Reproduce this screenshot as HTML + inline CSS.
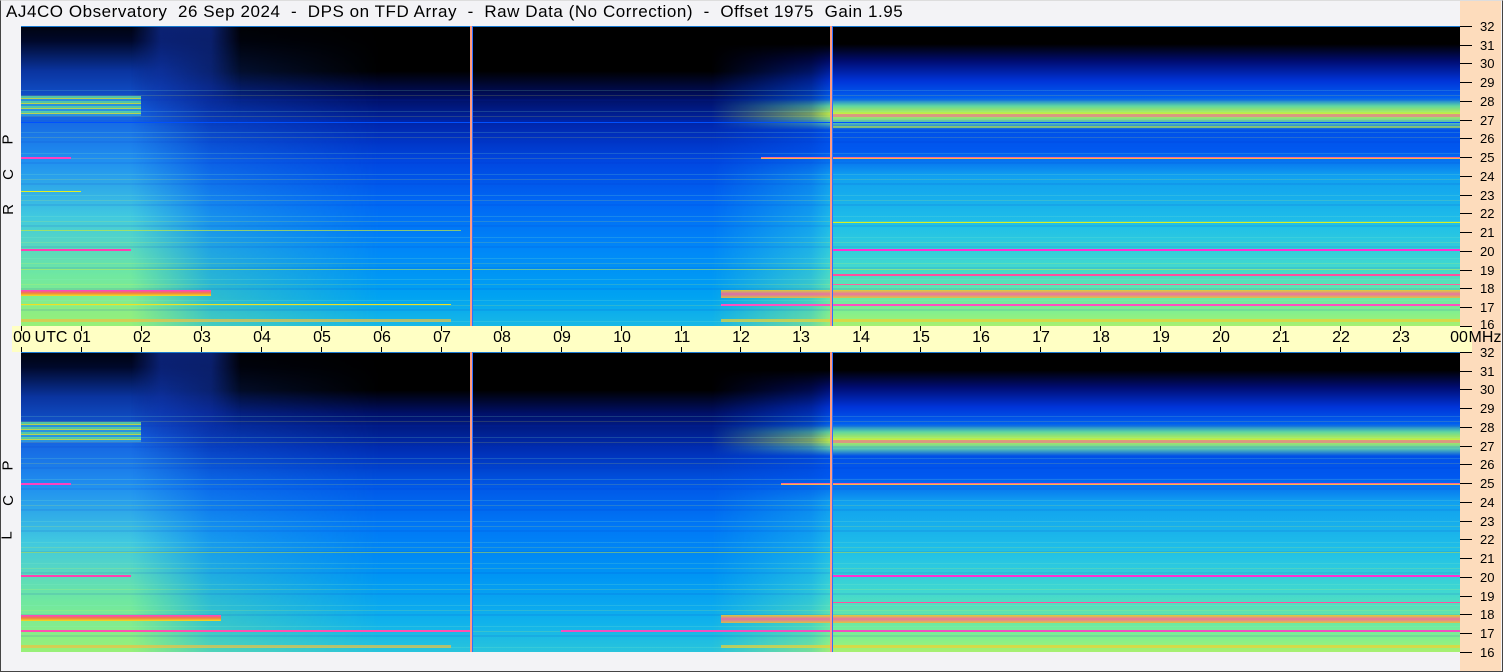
<!DOCTYPE html>
<html><head><meta charset="utf-8"><style>
*{margin:0;padding:0;box-sizing:border-box}
body{width:1503px;height:672px;background:#f3f3f6;position:relative;overflow:hidden;font-family:"Liberation Sans",Tahoma,sans-serif;color:#000}
#frame{position:absolute;left:0;top:0;width:1503px;height:672px;border:1px solid #444;border-top-color:#ddd}
.title{position:absolute;left:6px;top:2px;font-size:17px;white-space:pre;letter-spacing:0.55px}
.panel{position:absolute;left:21px;width:1439px;height:300px;overflow:hidden;background:linear-gradient(#000 0,#000 45px,#000e60 70px,#0028b0 100px,#0046e0 135px,#0066f4 175px,#0088f8 225px,#00a2f2 270px,#18b8e6 300px)}
.r{position:absolute;top:0;height:300px}
.lo{left:0;width:360px;background:linear-gradient(#000410 0,#00082a 15px,#0a34a0 45px,#1460e0 85px,#2090f0 135px,#40c8e0 190px,#70e8a0 250px,#98f078 300px);-webkit-mask-image:linear-gradient(to right,#000 0,#000 110px,rgba(0,0,0,.35) 190px,transparent 360px);mask-image:linear-gradient(to right,#000 0,#000 110px,rgba(0,0,0,.35) 190px,transparent 360px)}
.st{left:110px;width:110px;background:linear-gradient(rgba(20,60,200,.55) 0,rgba(20,60,200,.35) 60px,transparent 100px);-webkit-mask-image:linear-gradient(to right,transparent 0,#000 30px,#000 80px,transparent 110px);mask-image:linear-gradient(to right,transparent 0,#000 30px,#000 80px,transparent 110px)}
.ro{left:690px;width:749px;background:linear-gradient(#000 0,#000 18px,#000c70 35px,#0034d8 55px,#0060f0 72px,#60d8a0 80px,#c8f040 88px,#60d0b0 96px,#0050e8 104px,#0058f0 125px,#10a0f0 150px,#20c0e8 200px,#40d8d0 240px,#80f090 285px,#a8f070 300px);-webkit-mask-image:linear-gradient(to right,transparent 0,rgba(0,0,0,.6) 100px,#000 122px);mask-image:linear-gradient(to right,transparent 0,rgba(0,0,0,.6) 100px,#000 122px)}
.l{position:absolute;height:1px}
.noise{position:absolute;left:0;width:1439px;background:repeating-linear-gradient(to bottom,transparent 0 4px,rgba(140,240,200,.22) 4px 5px,transparent 5px 9px,rgba(255,255,60,.18) 9px 10px,transparent 10px 13px,rgba(0,40,200,.12) 13px 15px,transparent 15px 21px)}
.v{position:absolute;top:0;height:300px;width:2px;background:#ff9a80;box-shadow:1px 0 0 #3070ff}
.axis{position:absolute;left:12px;top:326px;width:1460px;height:26px;background:#ffffc4}
.tk{position:absolute;width:1px;height:5px;background:#000}
.tl{position:absolute;top:329px;font-size:16px;transform:translateX(-50%);white-space:pre}
.ra{position:absolute;left:1460px;top:0;width:41px;height:671px;background:#fddcbc}
.rt{position:absolute;left:1460px;width:12px;height:1px;background:#000}
.rl{position:absolute;left:1480px;font-size:13px}
.side{position:absolute;left:3px;font-size:15px;transform:rotate(-90deg)}
</style></head><body>
<div class="ra"></div>
<div class="title">AJ4CO Observatory  26 Sep 2024  -  DPS on TFD Array  -  Raw Data (No Correction)  -  Offset 1975  Gain 1.95</div>

<div class="panel" style="top:26px">
 <div class="r lo"></div>
 <div class="r st"></div>
 <div class="r ro"></div>
 <div class="noise" style="top:60px;height:240px;opacity:.8"></div>
 <div class="l" style="top:0;left:0;width:1439px;background:#1878d0"></div>
 <div class="l" style="top:70px;left:0;width:120px;height:20px;background:repeating-linear-gradient(#60e0a0 0 2px,#e0f030 2px 3px,#30a0e0 3px 5px);opacity:.8"></div>
 <div class="l" style="top:96px;left:0;width:1439px;background:#0050ff"></div>
 <div class="l" style="top:88px;left:812px;width:627px;height:3px;background:#f060a0;opacity:.6"></div>
 <div class="l" style="top:100px;left:812px;width:627px;height:2px;background:#c0e840;opacity:.6"></div>
 <div class="l" style="top:131px;left:740px;width:699px;height:2px;background:linear-gradient(#ff40c0,#f0e020)"></div>
 <div class="l" style="top:131px;left:0;width:50px;height:2px;background:#ff40c0"></div>
 <div class="l" style="top:165px;left:0;width:60px;background:#e0f020"></div>
 <div class="l" style="top:204px;left:0;width:440px;background:#c0e840;opacity:.7"></div>
 <div class="l" style="top:223px;left:0;width:110px;height:2px;background:#ff40b0"></div>
 <div class="l" style="top:223px;left:812px;width:627px;height:2px;background:#ff30d0"></div>
 <div class="l" style="top:196px;left:812px;width:627px;background:#d8f020"></div>
 <div class="l" style="top:243px;left:0;width:1439px;background:#c0f050;opacity:.5"></div>
 <div class="l" style="top:248px;left:812px;width:627px;height:2px;background:#ff50a0"></div>
 <div class="l" style="top:258px;left:812px;width:627px;background:#ff60a0"></div>
 <div class="l" style="top:264px;left:0;width:190px;height:6px;background:linear-gradient(#ff40d0,#f08040,#f0e020)"></div>
 <div class="l" style="top:264px;left:700px;width:739px;height:8px;background:linear-gradient(#f0d020,#ff60a0,#f0c030);opacity:.85"></div>
 <div class="l" style="top:278px;left:0;width:430px;background:#f0e020"></div>
 <div class="l" style="top:278px;left:700px;width:739px;height:2px;background:#ff50c0"></div>
 <div class="l" style="top:293px;left:0;width:430px;height:3px;background:#f0c040;opacity:.7"></div>
 <div class="l" style="top:293px;left:700px;width:739px;height:3px;background:#f0d030;opacity:.7"></div>
 <div class="v" style="left:449px"></div>
 <div class="v" style="left:809px"></div>
</div>

<div class="axis"></div>

<div class="panel" style="top:352px;background:linear-gradient(#000 0,#000 38px,#00106a 62px,#0030b8 100px,#0058e8 135px,#0078f6 175px,#0096f4 225px,#10b2ec 270px,#28c4dc 300px)">
 <div class="r lo"></div>
 <div class="r st"></div>
 <div class="r ro"></div>
 <div class="noise" style="top:60px;height:240px;opacity:.8"></div>
 <div class="l" style="top:0;left:0;width:1439px;background:#1878d0"></div>
 <div class="l" style="top:70px;left:0;width:120px;height:20px;background:repeating-linear-gradient(#60e0a0 0 2px,#e0f030 2px 3px,#30a0e0 3px 5px);opacity:.8"></div>
 <div class="l" style="top:88px;left:812px;width:627px;height:3px;background:#f060a0;opacity:.6"></div>
 <div class="l" style="top:131px;left:760px;width:679px;height:2px;background:linear-gradient(#ff40c0,#f0e020)"></div>
 <div class="l" style="top:131px;left:0;width:50px;height:2px;background:#ff40c0"></div>
 <div class="l" style="top:200px;left:0;width:1439px;background:#c0e840;opacity:.5"></div>
 <div class="l" style="top:223px;left:0;width:110px;height:2px;background:#ff40b0"></div>
 <div class="l" style="top:223px;left:812px;width:627px;height:2px;background:#ff30d0"></div>
 <div class="l" style="top:250px;left:812px;width:627px;background:#ff50a0"></div>
 <div class="l" style="top:263px;left:0;width:200px;height:6px;background:linear-gradient(#ff40d0,#f08040,#f0e020)"></div>
 <div class="l" style="top:263px;left:700px;width:739px;height:8px;background:linear-gradient(#f0d020,#ff60a0,#f0c030);opacity:.85"></div>
 <div class="l" style="top:278px;left:0;width:450px;height:2px;background:#ff50b0"></div>
 <div class="l" style="top:278px;left:540px;width:899px;height:2px;background:#f050c0"></div>
 <div class="l" style="top:293px;left:0;width:430px;height:3px;background:#f0c040;opacity:.7"></div>
 <div class="l" style="top:293px;left:700px;width:739px;height:3px;background:#f0d030;opacity:.7"></div>
 <div class="v" style="left:449px"></div>
 <div class="v" style="left:809px"></div>
</div>

<div class="tk" style="left:21px;top:326px"></div><div class="tk" style="left:21px;top:347px"></div>
<div class="tk" style="left:81px;top:326px"></div><div class="tk" style="left:81px;top:347px"></div>
<div class="tk" style="left:141px;top:326px"></div><div class="tk" style="left:141px;top:347px"></div>
<div class="tk" style="left:201px;top:326px"></div><div class="tk" style="left:201px;top:347px"></div>
<div class="tk" style="left:261px;top:326px"></div><div class="tk" style="left:261px;top:347px"></div>
<div class="tk" style="left:321px;top:326px"></div><div class="tk" style="left:321px;top:347px"></div>
<div class="tk" style="left:381px;top:326px"></div><div class="tk" style="left:381px;top:347px"></div>
<div class="tk" style="left:441px;top:326px"></div><div class="tk" style="left:441px;top:347px"></div>
<div class="tk" style="left:501px;top:326px"></div><div class="tk" style="left:501px;top:347px"></div>
<div class="tk" style="left:561px;top:326px"></div><div class="tk" style="left:561px;top:347px"></div>
<div class="tk" style="left:621px;top:326px"></div><div class="tk" style="left:621px;top:347px"></div>
<div class="tk" style="left:681px;top:326px"></div><div class="tk" style="left:681px;top:347px"></div>
<div class="tk" style="left:740px;top:326px"></div><div class="tk" style="left:740px;top:347px"></div>
<div class="tk" style="left:800px;top:326px"></div><div class="tk" style="left:800px;top:347px"></div>
<div class="tk" style="left:860px;top:326px"></div><div class="tk" style="left:860px;top:347px"></div>
<div class="tk" style="left:920px;top:326px"></div><div class="tk" style="left:920px;top:347px"></div>
<div class="tk" style="left:980px;top:326px"></div><div class="tk" style="left:980px;top:347px"></div>
<div class="tk" style="left:1040px;top:326px"></div><div class="tk" style="left:1040px;top:347px"></div>
<div class="tk" style="left:1100px;top:326px"></div><div class="tk" style="left:1100px;top:347px"></div>
<div class="tk" style="left:1160px;top:326px"></div><div class="tk" style="left:1160px;top:347px"></div>
<div class="tk" style="left:1220px;top:326px"></div><div class="tk" style="left:1220px;top:347px"></div>
<div class="tk" style="left:1280px;top:326px"></div><div class="tk" style="left:1280px;top:347px"></div>
<div class="tk" style="left:1340px;top:326px"></div><div class="tk" style="left:1340px;top:347px"></div>
<div class="tk" style="left:1400px;top:326px"></div><div class="tk" style="left:1400px;top:347px"></div>

<div class="tl" style="left:22px">00</div>
<div class="tl" style="left:51px">UTC</div>
<div class="tl" style="left:82px">01</div>
<div class="tl" style="left:142px">02</div>
<div class="tl" style="left:202px">03</div>
<div class="tl" style="left:262px">04</div>
<div class="tl" style="left:322px">05</div>
<div class="tl" style="left:382px">06</div>
<div class="tl" style="left:442px">07</div>
<div class="tl" style="left:502px">08</div>
<div class="tl" style="left:562px">09</div>
<div class="tl" style="left:622px">10</div>
<div class="tl" style="left:682px">11</div>
<div class="tl" style="left:741px">12</div>
<div class="tl" style="left:801px">13</div>
<div class="tl" style="left:861px">14</div>
<div class="tl" style="left:921px">15</div>
<div class="tl" style="left:981px">16</div>
<div class="tl" style="left:1041px">17</div>
<div class="tl" style="left:1101px">18</div>
<div class="tl" style="left:1161px">19</div>
<div class="tl" style="left:1221px">20</div>
<div class="tl" style="left:1281px">21</div>
<div class="tl" style="left:1341px">22</div>
<div class="tl" style="left:1401px">23</div>
<div class="tl" style="left:1459px">00</div>
<div class="tl" style="left:1485px">MHz</div>

<div class="rt" style="top:26px"></div><div class="rl" style="top:19px">32</div>
<div class="rt" style="top:45px"></div><div class="rl" style="top:38px">31</div>
<div class="rt" style="top:63px"></div><div class="rl" style="top:56px">30</div>
<div class="rt" style="top:82px"></div><div class="rl" style="top:75px">29</div>
<div class="rt" style="top:101px"></div><div class="rl" style="top:94px">28</div>
<div class="rt" style="top:120px"></div><div class="rl" style="top:113px">27</div>
<div class="rt" style="top:138px"></div><div class="rl" style="top:131px">26</div>
<div class="rt" style="top:157px"></div><div class="rl" style="top:150px">25</div>
<div class="rt" style="top:176px"></div><div class="rl" style="top:169px">24</div>
<div class="rt" style="top:195px"></div><div class="rl" style="top:188px">23</div>
<div class="rt" style="top:213px"></div><div class="rl" style="top:206px">22</div>
<div class="rt" style="top:232px"></div><div class="rl" style="top:225px">21</div>
<div class="rt" style="top:251px"></div><div class="rl" style="top:244px">20</div>
<div class="rt" style="top:270px"></div><div class="rl" style="top:263px">19</div>
<div class="rt" style="top:288px"></div><div class="rl" style="top:281px">18</div>
<div class="rt" style="top:307px"></div><div class="rl" style="top:300px">17</div>
<div class="rt" style="top:326px"></div><div class="rl" style="top:317px">16</div>
<div class="rt" style="top:352px"></div><div class="rl" style="top:345px">32</div>
<div class="rt" style="top:371px"></div><div class="rl" style="top:364px">31</div>
<div class="rt" style="top:389px"></div><div class="rl" style="top:382px">30</div>
<div class="rt" style="top:408px"></div><div class="rl" style="top:401px">29</div>
<div class="rt" style="top:427px"></div><div class="rl" style="top:420px">28</div>
<div class="rt" style="top:446px"></div><div class="rl" style="top:439px">27</div>
<div class="rt" style="top:464px"></div><div class="rl" style="top:457px">26</div>
<div class="rt" style="top:483px"></div><div class="rl" style="top:476px">25</div>
<div class="rt" style="top:502px"></div><div class="rl" style="top:495px">24</div>
<div class="rt" style="top:521px"></div><div class="rl" style="top:514px">23</div>
<div class="rt" style="top:539px"></div><div class="rl" style="top:532px">22</div>
<div class="rt" style="top:558px"></div><div class="rl" style="top:551px">21</div>
<div class="rt" style="top:577px"></div><div class="rl" style="top:570px">20</div>
<div class="rt" style="top:596px"></div><div class="rl" style="top:589px">19</div>
<div class="rt" style="top:614px"></div><div class="rl" style="top:607px">18</div>
<div class="rt" style="top:633px"></div><div class="rl" style="top:626px">17</div>
<div class="rt" style="top:652px"></div><div class="rl" style="top:645px">16</div>

<div class="side" style="top:131px">P</div>
<div class="side" style="top:166px">C</div>
<div class="side" style="top:201px">R</div>
<div class="side" style="top:457px">P</div>
<div class="side" style="top:492px">C</div>
<div class="side" style="top:527px">L</div>

<div id="frame"></div>
</body></html>
